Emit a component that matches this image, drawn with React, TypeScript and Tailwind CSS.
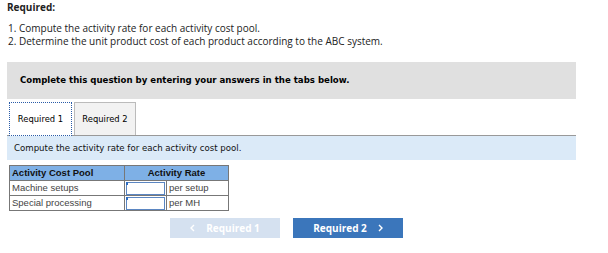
import React from "react";

function Chevron({ dir }: { dir: "left" | "right" }) {
  return (
    <svg width="5" height="8" viewBox="0 0 5 8" className="block">
      <path
        d={dir === "right" ? "M1 1 L4 4 L1 7" : "M4 1 L1 4 L4 7"}
        fill="none"
        stroke="white"
        strokeWidth="1.4"
      />
    </svg>
  );
}

export default function App() {
  return (
    <div className="w-[608px] h-[253px] bg-white relative overflow-hidden">
      <div className="pl-[7px] pt-[1px] font-['Open_Sans',sans-serif] text-[10px] text-[#222] leading-[12px]">
        <div className="font-bold">Required:</div>
        <div className="mt-[9px] pl-[1px] leading-[13px]">1. Compute the activity rate for each activity cost pool.</div>
        <div className="pl-[1px] leading-[13px]">2. Determine the unit product cost of each product according to the ABC system.</div>
      </div>
      <div className="ml-[7px] mt-[14px] w-[569px] h-[37px] bg-[#e0e0e0] flex items-center pl-[13px] font-['DejaVu_Sans',sans-serif] font-bold text-[8.6px] text-black">
        Complete this question by entering your answers in the tabs below.
      </div>
      <div className="ml-[7px] w-[569px] mt-[3px]">
        <div className="flex items-end h-[34px] border-b border-[#999] font-['DejaVu_Sans',sans-serif] text-[8.4px] text-black">
          <div className="ml-[2px] w-[63px] h-[34px] -mb-px bg-white border border-dotted border-[#2a5ca8] flex items-center justify-center">Required 1</div>
          <div className="ml-[2px] w-[62px] h-[33px] bg-[#f2f2f2] border border-[#bbb] border-b-0 flex items-center justify-center">Required 2</div>
        </div>
        <div className="h-[24px] bg-[#dbeaf8] flex items-center pl-[7px] font-['DejaVu_Sans',sans-serif] text-[8.6px] text-[#111]">
          Compute the activity rate for each activity cost pool.
        </div>
      </div>
      <table className="ml-[9px] mt-[5px] border-collapse font-['Liberation_Sans',sans-serif] text-[9.5px] leading-[10px]">
        <tbody>
          <tr className="bg-[#7eb0e6] h-[15px] font-bold text-[#111]">
            <td className="border border-[#777] w-[115px] px-[2px]">Activity Cost Pool</td>
            <td className="border border-[#777] text-center" colSpan={2}>Activity Rate</td>
          </tr>
          <tr className="h-[15px] text-[#444]">
            <td className="border border-[#777] px-[2px]">Machine setups</td>
            <td className="border border-[#777] w-[42px] p-0 relative">
              <div className="h-[13px] mx-[1px] border border-[#5b86c2] bg-white" />
              <div className="absolute left-[1px] top-[1px] w-[2px] h-[3px] bg-[#2d6cc0]" />
            </td>
            <td className="border border-[#777] w-[62px] px-[2px]">per setup</td>
          </tr>
          <tr className="h-[15px] text-[#444]">
            <td className="border border-[#777] px-[2px]">Special processing</td>
            <td className="border border-[#777] p-0 relative">
              <div className="h-[13px] mx-[1px] border border-[#5b86c2] bg-white" />
              <div className="absolute left-[1px] top-[1px] w-[2px] h-[3px] bg-[#2d6cc0]" />
            </td>
            <td className="border border-[#777] px-[2px]">per MH</td>
          </tr>
        </tbody>
      </table>
      <div className="flex mt-[7px] ml-[170px] gap-[13px] font-['Open_Sans',sans-serif] font-bold text-[10px] text-white">
        <div className="w-[110px] h-[20px] bg-[#d5e1f0] flex items-center justify-center gap-[11px]">
          <Chevron dir="left" />
          <span>Required 1</span>
        </div>
        <div className="w-[110px] h-[20px] bg-[#3b76bb] flex items-center justify-center gap-[11px]">
          <span>Required 2</span>
          <Chevron dir="right" />
        </div>
      </div>
    </div>
  );
}
